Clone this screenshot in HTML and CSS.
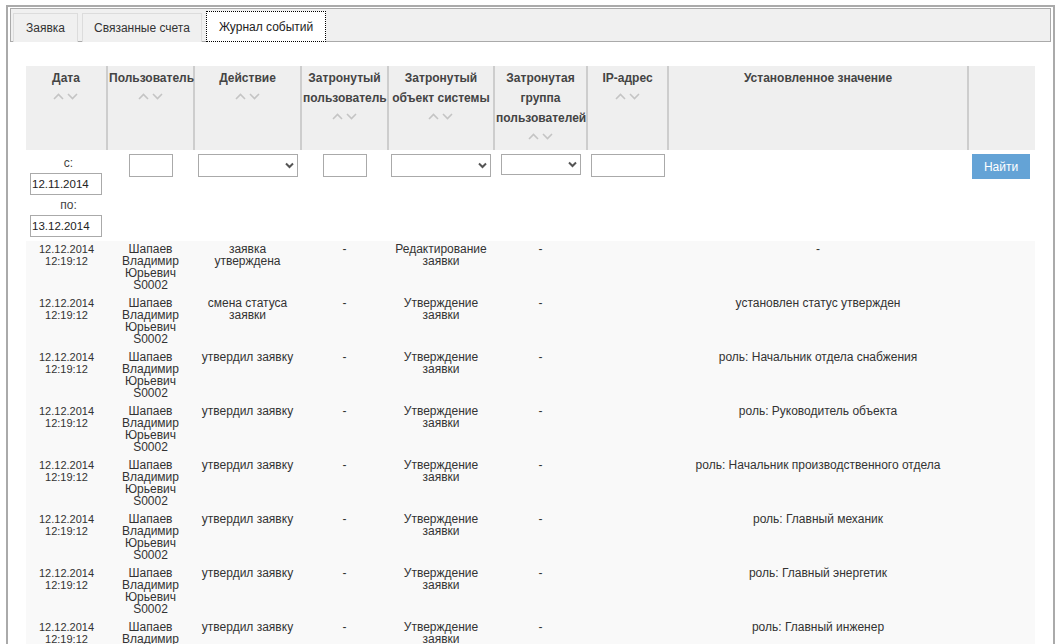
FILE: index.html
```html
<!DOCTYPE html>
<html lang="ru">
<head>
<meta charset="utf-8">
<title>Журнал событий</title>
<link rel="stylesheet" href="styles.css">
</head>
<body>
<div class="frame">
  <div class="tabbar">
    <div class="tab first">Заявка</div>
    <div class="tab">Связанные счета</div>
    <div class="tab active">Журнал событий</div>
  </div>
  <div class="content">
    <table class="log">
      <colgroup>
        <col style="width:81px"><col style="width:87px"><col style="width:107px"><col style="width:87px"><col style="width:106px"><col style="width:93px"><col style="width:81px"><col style="width:300px"><col style="width:67px">
      </colgroup>
      <thead>
        <tr class="head">
          <th>Дата<br><span class="sort"><svg width="26" height="7" viewBox="0 0 26 7"><path d="M1 6 L5.5 1.5 L10 6" /><path d="M15 1 L19.5 5.5 L24 1" /></svg></span></th>
          <th>Пользователь<br><span class="sort"><svg width="26" height="7" viewBox="0 0 26 7"><path d="M1 6 L5.5 1.5 L10 6" /><path d="M15 1 L19.5 5.5 L24 1" /></svg></span></th>
          <th>Действие<br><span class="sort"><svg width="26" height="7" viewBox="0 0 26 7"><path d="M1 6 L5.5 1.5 L10 6" /><path d="M15 1 L19.5 5.5 L24 1" /></svg></span></th>
          <th>Затронутый пользователь<br><span class="sort"><svg width="26" height="7" viewBox="0 0 26 7"><path d="M1 6 L5.5 1.5 L10 6" /><path d="M15 1 L19.5 5.5 L24 1" /></svg></span></th>
          <th>Затронутый объект системы<br><span class="sort"><svg width="26" height="7" viewBox="0 0 26 7"><path d="M1 6 L5.5 1.5 L10 6" /><path d="M15 1 L19.5 5.5 L24 1" /></svg></span></th>
          <th>Затронутая группа пользователей<br><span class="sort"><svg width="26" height="7" viewBox="0 0 26 7"><path d="M1 6 L5.5 1.5 L10 6" /><path d="M15 1 L19.5 5.5 L24 1" /></svg></span></th>
          <th>IP-адрес<br><span class="sort"><svg width="26" height="7" viewBox="0 0 26 7"><path d="M1 6 L5.5 1.5 L10 6" /><path d="M15 1 L19.5 5.5 L24 1" /></svg></span></th>
          <th>Установленное значение</th>
          <th class="last"></th>
        </tr>
        <tr class="filters">
          <td class="dates">
            <div class="lbl">с:</div>
            <input class="inp date" type="text" value="12.11.2014">
            <div class="lbl">по:</div>
            <input class="inp date" type="text" value="13.12.2014">
          </td>
          <td><input class="inp w44" type="text"></td>
          <td><div class="sel w100"><svg width="9" height="7" viewBox="0 0 9 7"><path d="M1 1.5 L4.5 5 L8 1.5" /></svg></div></td>
          <td><input class="inp w44" type="text"></td>
          <td><div class="sel w100"><svg width="9" height="7" viewBox="0 0 9 7"><path d="M1 1.5 L4.5 5 L8 1.5" /></svg></div></td>
          <td><div class="sel w80 short"><svg width="9" height="7" viewBox="0 0 9 7"><path d="M1 1.5 L4.5 5 L8 1.5" /></svg></div></td>
          <td><input class="inp w74" type="text"></td>
          <td></td>
          <td class="btncell"><button class="find">Найти</button></td>
        </tr>
      </thead>
      <tbody>
        <tr><td class="dt">12.12.2014<br>12:19:12</td><td>Шапаев<br>Владимир<br>Юрьевич<br>S0002</td><td>заявка<br>утверждена</td><td>-</td><td>Редактирование<br>заявки</td><td>-</td><td></td><td>-</td><td></td></tr>
        <tr><td class="dt">12.12.2014<br>12:19:12</td><td>Шапаев<br>Владимир<br>Юрьевич<br>S0002</td><td>смена статуса<br>заявки</td><td>-</td><td>Утверждение<br>заявки</td><td>-</td><td></td><td>установлен статус утвержден</td><td></td></tr>
        <tr><td class="dt">12.12.2014<br>12:19:12</td><td>Шапаев<br>Владимир<br>Юрьевич<br>S0002</td><td>утвердил заявку</td><td>-</td><td>Утверждение<br>заявки</td><td>-</td><td></td><td>роль: Начальник отдела снабжения</td><td></td></tr>
        <tr><td class="dt">12.12.2014<br>12:19:12</td><td>Шапаев<br>Владимир<br>Юрьевич<br>S0002</td><td>утвердил заявку</td><td>-</td><td>Утверждение<br>заявки</td><td>-</td><td></td><td>роль: Руководитель объекта</td><td></td></tr>
        <tr><td class="dt">12.12.2014<br>12:19:12</td><td>Шапаев<br>Владимир<br>Юрьевич<br>S0002</td><td>утвердил заявку</td><td>-</td><td>Утверждение<br>заявки</td><td>-</td><td></td><td>роль: Начальник производственного отдела</td><td></td></tr>
        <tr><td class="dt">12.12.2014<br>12:19:12</td><td>Шапаев<br>Владимир<br>Юрьевич<br>S0002</td><td>утвердил заявку</td><td>-</td><td>Утверждение<br>заявки</td><td>-</td><td></td><td>роль: Главный механик</td><td></td></tr>
        <tr><td class="dt">12.12.2014<br>12:19:12</td><td>Шапаев<br>Владимир<br>Юрьевич<br>S0002</td><td>утвердил заявку</td><td>-</td><td>Утверждение<br>заявки</td><td>-</td><td></td><td>роль: Главный энергетик</td><td></td></tr>
        <tr><td class="dt">12.12.2014<br>12:19:12</td><td>Шапаев<br>Владимир<br>Юрьевич<br>S0002</td><td>утвердил заявку</td><td>-</td><td>Утверждение<br>заявки</td><td>-</td><td></td><td>роль: Главный инженер</td><td></td></tr>
      </tbody>
    </table>
  </div>
</div>
</body>
</html>
```

FILE: styles.css
```css
html, body {
  margin: 0;
  padding: 0;
  background: #ffffff;
  overflow: hidden;
}

body {
  font-family: "Liberation Sans", Arial, sans-serif;
  font-size: 12px;
  color: #333333;
  padding: 5px 0 0 6px;
  height: 644px;
  box-sizing: border-box;
}

.frame {
  width: 1049px;
  height: 700px;
  box-sizing: border-box;
  border: 2px solid #aaaaaa;
  padding: 1px 2px 0 2px;
}

.tabbar {
  display: flex;
  align-items: flex-end;
  gap: 4px;
  height: 34px;
  box-sizing: border-box;
  border: 1px solid #aaaaaa;
  background: #f0f0f0;
  padding: 0 0 0 2px;
}

.tab {
  height: 29px;
  box-sizing: border-box;
  padding: 0 11px;
  display: flex;
  align-items: center;
  border: 1px solid #dcdcdc;
  border-bottom: none;
  background: #f0f0f0;
  color: #333333;
  margin-bottom: -1px;
}

.tab.first {
  padding: 0 12px;
}

.tab.active {
  background: #ffffff;
  border: 1px dotted #000000;
  height: 31px;
  padding: 0 12px;
  color: #222222;
}

.content {
  padding: 24px 18px 0 16px;
}

.log {
  border-collapse: collapse;
  table-layout: fixed;
  width: 1009px;
}

.head th {
  background: #efefef;
  font-weight: bold;
  color: #444444;
  line-height: 20px;
  vertical-align: top;
  text-align: center;
  padding: 2px 1px 0 1px;
  height: 84px;
  box-sizing: border-box;
  border-right: 2px solid #cdcdcd;
}

.head th.last {
  border-right: none;
}

.sort {
  display: inline-block;
  line-height: 10px;
  height: 14px;
  padding-top: 5px;
  vertical-align: top;
}

.sort svg {
  display: block;
}

.sort path {
  fill: none;
  stroke: #c4c4c4;
  stroke-width: 1.6;
}

.filters td {
  vertical-align: top;
  text-align: center;
  padding: 4px 0 0 0;
  height: 91px;
  box-sizing: border-box;
}

.filters td.dates {
  text-align: left;
  padding: 3px 0 4px 4px;
}

.lbl {
  text-align: center;
  line-height: 20px;
  height: 20px;
  color: #444444;
}

.inp {
  display: block;
  margin: 0 auto;
  height: 23px;
  box-sizing: border-box;
  border: 1px solid #aaaaaa;
  background: #ffffff;
  font-family: "Liberation Sans", Arial, sans-serif;
  font-size: 12px;
  color: #222222;
  padding: 0 2px;
  outline: none;
}

.inp.date {
  width: 72px;
  height: 22px;
  margin: 0;
  padding: 0 1px;
  font-size: 11.5px;
}

.w44 { width: 44px; }
.w74 { width: 74px; }

.sel {
  height: 23px;
  box-sizing: border-box;
  border: 1px solid #aaaaaa;
  background: #ffffff;
  margin: 0 auto;
  display: flex;
  align-items: center;
  justify-content: flex-end;
  padding-right: 3px;
}

.sel.short { height: 21px; }
.w100 { width: 100px; }
.w80 { width: 80px; }

.sel path {
  fill: none;
  stroke: #555555;
  stroke-width: 2;
}

.filters td.btncell {
  text-align: left;
  padding-left: 4px;
}

.find {
  width: 58px;
  height: 25px;
  border: none;
  background: #64a3d6;
  color: #ffffff;
  font-family: "Liberation Sans", Arial, sans-serif;
  font-size: 12px;
  padding: 0;
}

tbody td {
  background: #f9f9f9;
  text-align: center;
  vertical-align: top;
  line-height: 12px;
  padding: 2px 0 4px 0;
  height: 54px;
  box-sizing: border-box;
  color: #333333;
}

tbody td.dt {
  font-size: 11px;
}
```
